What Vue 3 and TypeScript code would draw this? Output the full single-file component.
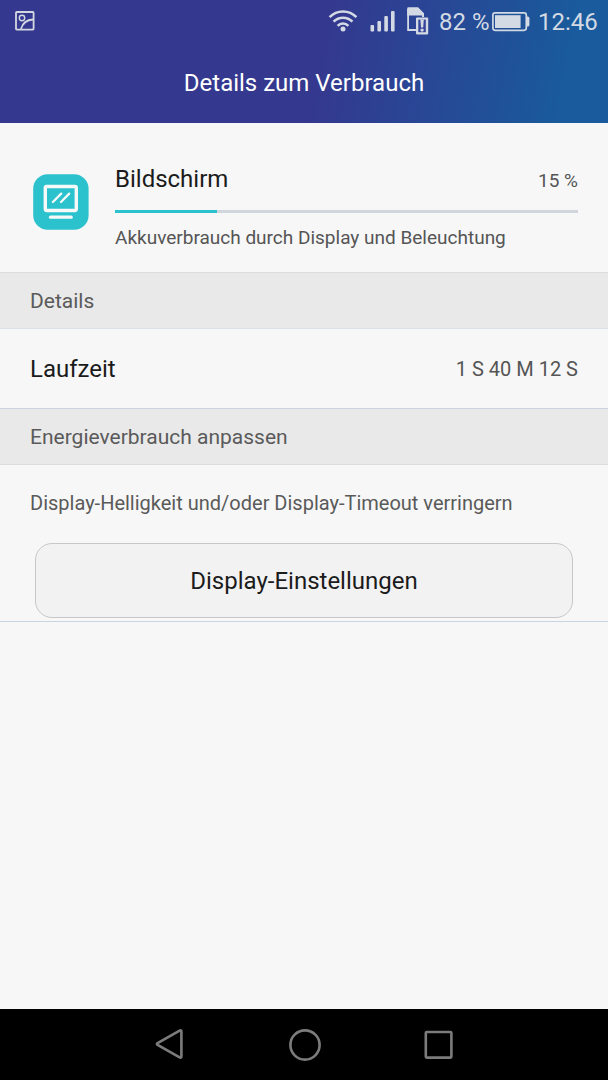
<script setup lang="ts">
interface Usage {
  name: string
  percent: number
  fill: number
  summary: string
}

const usage: Usage = {
  name: 'Bildschirm',
  percent: 15,
  fill: 22,
  summary: 'Akkuverbrauch durch Display und Beleuchtung',
}
const battery = 82
const clock = '12:46'
const runtime = '1 S 40 M 12 S'
</script>

<template>
  <div class="screen">
    <header class="top">
      <div class="status">
        <svg class="shot" width="20" height="20" viewBox="0 0 20 20" fill="none" stroke="#d3d7e0">
          <rect x="1" y="1" width="17.6" height="17.6" rx="0.8" stroke-width="1.8" />
          <circle cx="7" cy="7" r="2.7" stroke-width="1.4" />
          <path d="M6 18C7.5 12.5 12 8.8 18 8.5" stroke-width="1.8" />
        </svg>
        <svg class="wifi" width="30" height="24" viewBox="0 0 30 24" fill="none" stroke="#d3dae4" stroke-width="2.6">
          <path d="M1.6 8.2C9 .6 21 .6 28.4 8.2" />
          <path d="M5.6 12.6C10.8 7.4 19.2 7.4 24.4 12.6" />
          <path d="M9.6 16.8C12.6 13.8 17.4 13.8 20.4 16.8" />
          <circle cx="15" cy="20" r="2.5" fill="#d3dae4" stroke="none" />
        </svg>
        <svg class="signal" width="26" height="22" viewBox="0 0 26 22" fill="#d3dae4">
          <rect x="0.5" y="15" width="3.6" height="6.6" rx="1" />
          <rect x="7.4" y="11" width="3.6" height="10.6" rx="1" />
          <rect x="14.3" y="6" width="3.6" height="15.6" rx="1" />
          <rect x="21" y="1" width="3.6" height="20.6" rx="1" />
        </svg>
        <svg class="sim" width="22" height="28" viewBox="0 0 22 28">
          <path d="M1.1 2V23H9M16 10V6.5" fill="none" stroke="#d3dae4" stroke-width="1.8" />
          <path d="M0.2 1.5Q0.2.3 1.4.3H11L17 6.3V10H15.2V8.4H0.2Z" fill="#d3dae4" />
          <rect x="9" y="10.4" width="12.2" height="17" rx="0.8" fill="#d3dae4" />
          <path d="M11.3 12.6H18.8V25.2H11.3Z" fill="#35459a" />
          <path d="M13.4 12.6H16.8L16.2 20.4H14Z" fill="#d3dae4" />
          <circle cx="15.1" cy="23.1" r="1.7" fill="#d3dae4" />
        </svg>
        <span class="charge">{{ battery }} %</span>
        <svg class="battery" width="38" height="20" viewBox="0 0 38 20">
          <rect x="0.9" y="0.9" width="33.4" height="17.4" rx="2.2" fill="none" stroke="#d3dae4" stroke-width="1.7" />
          <rect x="3" y="3.2" width="25.6" height="12.8" fill="#d3dae4" />
          <path d="M34.6 4.6H35.8Q37.4 4.6 37.4 6.2V13Q37.4 14.6 35.8 14.6H34.6Z" fill="#d3dae4" />
        </svg>
        <span class="clock">{{ clock }}</span>
      </div>
      <h1 class="title"><span>Details zum Verbrauch</span></h1>
    </header>

    <main>
      <section class="usage">
        <svg class="app-icon" width="56" height="56" viewBox="0 0 56 56" fill="none" stroke="#f7f9f9" stroke-linecap="round">
          <rect x="0.2" y="0.2" width="55.4" height="55.6" rx="14.5" fill="#2bc2cd" stroke="none" />
          <rect x="12.3" y="12.5" width="31" height="24" rx="1.4" stroke-width="3.4" />
          <path d="M19.9 28L28.2 19.6M28 28L36.2 19.6" stroke-width="2.3" />
          <path d="M17.5 43.2H38.2" stroke-width="3.2" />
        </svg>
        <div class="usage-body">
          <div class="usage-head">
            <span class="name">{{ usage.name }}</span>
            <span class="percent">{{ usage.percent }} %</span>
          </div>
          <div class="track"><div class="fill" :style="{ width: usage.fill + '%' }"></div></div>
          <p class="summary"><span>{{ usage.summary }}</span></p>
        </div>
      </section>

      <h2 class="section"><span>Details</span></h2>
      <div class="row">
        <span class="label">Laufzeit</span>
        <span class="value">{{ runtime }}</span>
      </div>

      <h2 class="section second"><span>Energieverbrauch anpassen</span></h2>
      <section class="adjust">
        <p class="hint"><span>Display-Helligkeit und/oder Display-Timeout verringern</span></p>
        <button class="settings" type="button"><span>Display-Einstellungen</span></button>
      </section>
    </main>

    <nav class="nav">
      <svg width="30" height="34" viewBox="0 0 30 34"><path d="M2.6 17Q1.2 16 2.6 15L24.6 2.6Q26.4 1.8 26.4 3.4V28.6Q26.4 30.2 24.6 29.4Z" /></svg>
      <svg width="34" height="34" viewBox="0 0 34 34"><circle cx="17" cy="17" r="14.6" /></svg>
      <svg width="30" height="34" viewBox="0 0 30 34"><rect x="1.8" y="4" width="25.6" height="25.6" rx="1" /></svg>
    </nav>
  </div>
</template>

<style>
body {
  background: #f7f7f7;
}
</style>

<style scoped>
.screen {
  width: 608px;
  height: 1080px;
  display: flex;
  flex-direction: column;
  overflow: hidden;
  background: #f7f7f7;
  font-family: Roboto, "Liberation Sans", sans-serif;
  color: #1b1b1b;
}
h1, h2, p {
  margin: 0;
  font-weight: 400;
}
.top {
  height: 123px;
  flex: none;
  background: linear-gradient(100deg, #34388e 0, #34388e 52%, #2a4595 68%, #1d5599 86%, #195b9c 92%, #195b9c 100%);
}
.status {
  height: 44px;
  display: flex;
  align-items: center;
  color: #d3dae4;
  font-size: 24px;
  white-space: nowrap;
}
.status svg {
  flex: none;
}
.shot {
  margin: -2px 293px 0 15px;
}
.wifi {
  margin: -3px 12px 0 0;
}
.signal {
  margin: -2px 11px 0 0;
}
.sim {
  margin: -2px 10px 0 0;
}
.charge {
  width: 53px;
}
.battery {
  margin-right: 8px;
}
.title {
  height: 79px;
  line-height: 79px;
  text-align: center;
  font-size: 24px;
  color: #fff;
}
main {
  flex: 1;
}
.usage {
  height: 149px;
  display: flex;
  padding: 0 30px 0 33px;
}
.app-icon {
  margin-top: 51px;
  margin-right: 26px;
  flex: none;
}
.usage-body {
  flex: 1;
  padding-top: 42px;
}
.usage-head {
  display: flex;
  justify-content: space-between;
  height: 45px;
}
.name {
  font-size: 24px;
  line-height: 28px;
}
.percent {
  font-size: 19px;
  line-height: 32px;
  color: #555;
}
.track {
  height: 3px;
  background: #d0d6dc;
}
.fill {
  height: 100%;
  background: #2bc2cd;
}
.summary {
  margin-top: 12px;
  font-size: 19px;
  line-height: 26px;
  color: #555;
  white-space: nowrap;
}
.section {
  box-sizing: border-box;
  height: 57px;
  padding: 0 30px;
  border-top: 1px solid #dcdcdc;
  border-bottom: 1px solid #dde2e8;
  background: #e9e9e9;
  color: #5a5a5a;
  font-size: 21px;
  line-height: 57px;
}
.section.second {
  border-top-color: #ccd2de;
  border-bottom-color: #dcdcdc;
  line-height: 56px;
}
.row {
  height: 79px;
  padding: 0 30px;
  display: flex;
  align-items: center;
  justify-content: space-between;
}
.label {
  font-size: 24px;
}
.value {
  font-size: 20px;
  color: #555;
}
.adjust {
  height: 156px;
  border-bottom: 1px solid #cbd5e2;
}
.hint {
  height: 78px;
  padding: 0 30px;
  font-size: 20px;
  line-height: 77px;
  color: #5a5a5a;
  white-space: nowrap;
}
.settings {
  display: block;
  box-sizing: border-box;
  width: 538px;
  height: 75px;
  margin: 0 auto;
  padding: 0;
  border: 1px solid #c5c7c9;
  border-radius: 17px;
  background: #f2f2f2;
  color: #1b1b1b;
  font: inherit;
  font-size: 24px;
}
.nav {
  height: 71px;
  flex: none;
  box-sizing: border-box;
  padding: 1px 154px 0 155px;
  display: flex;
  align-items: center;
  justify-content: space-between;
  background: #000;
}
.nav svg {
  fill: none;
  stroke: #7c7c7c;
  stroke-width: 2.6;
}
</style>
